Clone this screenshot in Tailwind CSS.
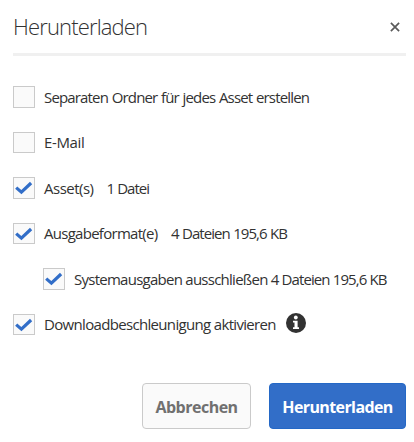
<!DOCTYPE html>
<html lang="de">
<head>
<meta charset="utf-8">
<title>Herunterladen</title>
<script src="https://cdn.jsdelivr.net/npm/@tailwindcss/browser@4"></script>
</head>
<body class="bg-white font-['Open_Sans','Noto_Sans',sans-serif] text-[#323232]">
<svg class="hidden"><symbol id="check" viewBox="0 0 20 20"><path d="M2.2 9.6 7.4 14.2 17.1 5" fill="none" stroke="#326ec8" stroke-width="3.2"/></symbol></svg>
<main class="flex h-[442px] w-[414px] flex-col pl-[13px] pr-2">
  <header class="flex h-14 items-center justify-between border-b-3 border-[#f0f0f0]">
    <h1 class="text-[22px] font-light tracking-[-0.85px] whitespace-nowrap">Herunterladen</h1>
    <button class="mr-[6px]" aria-label="Schließen"><svg class="size-[10px]" viewBox="0 0 10 10"><path d="M.9.9 9.1 9.1M9.1.9.9 9.1" stroke="#5a5a5a" stroke-width="1.7"/></svg></button>
  </header>
  <div class="mt-[30px] flex flex-col gap-6 text-[15px] whitespace-nowrap">
    <div class="flex h-[21.5px] items-center"><span class="h-full w-[22px] border border-[#cacaca] bg-[#fafafa]"></span><span class="ml-[9px] tracking-[-0.84px] [word-spacing:0.6px]">Separaten Ordner für jedes Asset erstellen</span></div>
    <div class="flex h-[21.5px] items-center"><span class="h-full w-[22px] border border-[#cacaca] bg-[#fafafa]"></span><span class="ml-[9px] tracking-[-0.35px]">E-Mail</span></div>
    <div class="flex h-[21.5px] items-center"><span class="h-full w-[22px] border border-[#cacaca] bg-[#fafafa]"><svg class="size-5"><use href="#check"/></svg></span><span class="ml-[9px] tracking-[-0.5px]">Asset(s)</span><span class="ml-[13px] tracking-[-0.95px]">1 Datei</span></div>
    <div class="flex h-[21.5px] items-center"><span class="h-full w-[22px] border border-[#cacaca] bg-[#fafafa]"><svg class="size-5"><use href="#check"/></svg></span><span class="ml-[9px] tracking-[-0.72px]">Ausgabeformat(e)</span><span class="ml-[13.5px] tracking-[-0.95px] [word-spacing:0.5px]">4 Dateien 195,6 KB</span></div>
    <div class="ml-[30px] flex h-[21.5px] items-center"><span class="h-full w-[22px] border border-[#cacaca] bg-[#fafafa]"><svg class="size-5"><use href="#check"/></svg></span><span class="ml-[9px] tracking-[-0.74px]">Systemausgaben ausschließen <span class="tracking-[-0.92px] [word-spacing:0.2px]">4 Dateien 195,6 KB</span></span></div>
    <div class="flex h-[21.5px] items-center"><span class="h-full w-[22px] border border-[#cacaca] bg-[#fafafa]"><svg class="size-5"><use href="#check"/></svg></span><span class="ml-[9px] tracking-[-0.67px]">Downloadbeschleunigung aktivieren</span>
      <svg class="mb-[2px] ml-[10.5px] size-5" viewBox="0 0 20 20"><circle cx="10" cy="10" r="10" fill="#323232"/><circle cx="9.8" cy="4.5" r="1.9" fill="#fff"/><path d="M7 7.7h4.6v6.6H13v1.8H7v-1.8h1.5V9.5H7z" fill="#fff"/></svg></div>
  </div>
  <footer class="mt-auto mb-[13px] flex justify-end gap-[18px] text-[16px] font-bold">
    <button class="h-[46px] w-[109px] rounded-[4px] border border-[#cacaca] bg-[#fafafa] pt-[2px] tracking-[-0.5px] text-[#707070]">Abbrechen</button>
    <button class="h-[46px] w-[137px] rounded-[4px] border border-[#2468c6] bg-[#326ec8] pt-[2px] tracking-[-0.6px] text-white">Herunterladen</button>
  </footer>
</main>
</body>
</html>
